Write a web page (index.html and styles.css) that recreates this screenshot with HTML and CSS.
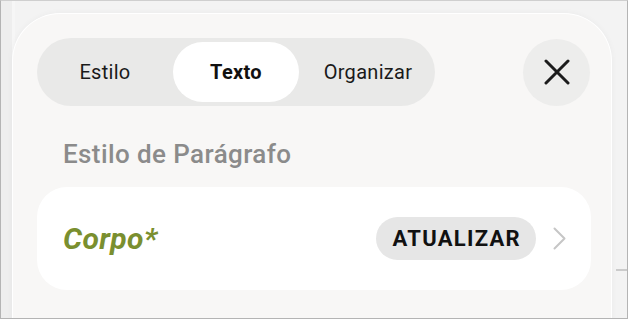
FILE: index.html
```html
<!DOCTYPE html>
<html lang="pt">
<head>
<meta charset="utf-8">
<title>Formatar</title>
<link rel="stylesheet" href="styles.css">
</head>
<body>
<div class="frame">
  <div class="sheet">
    <div class="panel">
      <div class="header">
        <div class="segmented">
          <div class="seg seg-a">Estilo</div>
          <div class="seg seg-b selected">Texto</div>
          <div class="seg seg-c">Organizar</div>
        </div>
        <button class="close" aria-label="Fechar">
          <svg width="26" height="26" viewBox="0 0 26 26"><path d="M2 2 L24 24 M24 2 L2 24" stroke="#1c1c1c" stroke-width="3" stroke-linecap="round" fill="none"/></svg>
        </button>
      </div>
      <div class="section-title">Estilo de Parágrafo</div>
      <div class="card">
        <span class="style-name">Corpo*</span>
        <div class="card-right">
          <span class="update">ATUALIZAR</span>
          <svg class="chev" width="13" height="23" viewBox="0 0 13 23"><path d="M1.5 1.5 L11.5 11.5 L1.5 21.5" stroke="#c6c6c6" stroke-width="2" stroke-linecap="round" stroke-linejoin="round" fill="none"/></svg>
        </div>
      </div>
    </div>
    <div class="side">
      <div class="side-line"></div>
    </div>
  </div>
</div>
</body>
</html>
```
FILE: styles.css
```css
html, body {
  margin: 0;
  padding: 0;
}
body {
  font-family: Roboto, "Liberation Sans", sans-serif;
  background: #efefef;
}
.frame {
  width: 628px;
  height: 319px;
  box-sizing: border-box;
  border: 1px solid #b4b4b4;
  border-top-color: #cfcfcf;
  background: #eeeeee;
  overflow: hidden;
}
.sheet {
  display: flex;
  height: 100%;
  margin-left: 11px;
  padding-top: 12px;
  box-sizing: border-box;
  background: linear-gradient(to right, #f6f6f6 0, #f6f6f6 3px, #f3f3f3 3px);
}
.panel {
  width: 600px;
  flex: none;
  height: 330px;
  box-sizing: border-box;
  padding: 24px 21px 0 24px;
  background: #f8f7f6;
  border: 1px solid #ffffff;
  border-bottom: none;
  border-radius: 48px 48px 0 0;
  box-shadow: 0 0 6px rgba(0, 0, 0, 0.04);
}
.header {
  display: flex;
  align-items: center;
  justify-content: space-between;
}
.segmented {
  display: flex;
  width: 398px;
  height: 68px;
  box-sizing: border-box;
  padding: 4px;
  border-radius: 34px;
  background: #e9e9e8;
}
.seg {
  display: flex;
  align-items: center;
  justify-content: center;
  font-size: 20px;
  letter-spacing: 0.3px;
  color: #1a1a1a;
  border-radius: 31px;
}
.seg-a { width: 132px; padding-right: 4px; box-sizing: border-box; }
.seg-b { width: 126px; }
.seg-c { width: 132px; padding-left: 6px; box-sizing: border-box; }
.selected {
  background: #ffffff;
  font-weight: 700;
  color: #111111;
}
.close {
  width: 67px;
  height: 67px;
  border: none;
  padding: 0;
  border-radius: 50%;
  background: #ededec;
  display: flex;
  align-items: center;
  justify-content: center;
}
.section-title {
  margin-top: 33px;
  padding-left: 26px;
  font-size: 26px;
  line-height: 30px;
  font-weight: 500;
  letter-spacing: 0.4px;
  color: #8b8b8b;
}
.card {
  margin-top: 18px;
  width: 554px;
  height: 103px;
  box-sizing: border-box;
  padding: 0 25px 0 26px;
  background: #ffffff;
  border-radius: 30px;
  display: flex;
  align-items: center;
  justify-content: space-between;
}
.style-name {
  font-size: 30px;
  font-weight: 700;
  font-style: italic;
  letter-spacing: 0.4px;
  color: #7a8f2f;
}
.card-right {
  display: flex;
  align-items: center;
  gap: 17px;
}
.update {
  display: flex;
  align-items: center;
  height: 43px;
  padding: 0 15px 0 16px;
  border-radius: 22px;
  background: #e6e6e6;
  font-size: 22px;
  font-weight: 700;
  letter-spacing: 1.3px;
  color: #111111;
}
.chev {
  display: block;
}
.side {
  flex: 1;
  padding-top: 256px;
}
.side-line {
  height: 2px;
  background: #cbcbcb;
  margin-left: 4px;
}
```
